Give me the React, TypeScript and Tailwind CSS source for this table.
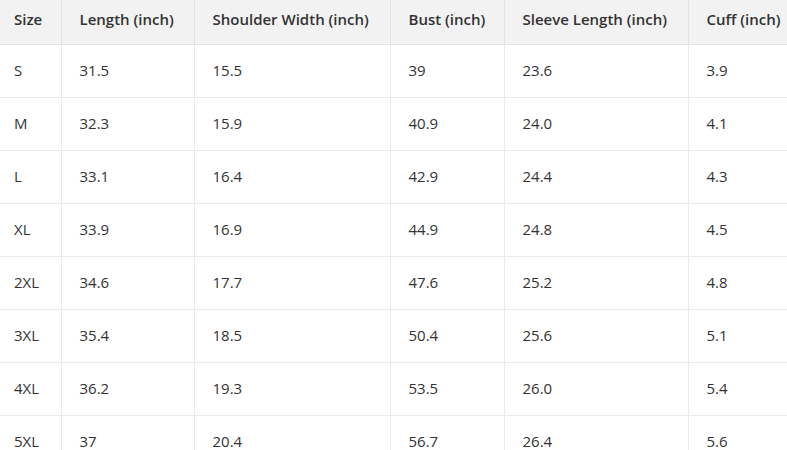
const headers = ['Size', 'Length (inch)', 'Shoulder Width (inch)', 'Bust (inch)', 'Sleeve Length (inch)', 'Cuff (inch)'];

const rows = [
  ['S', '31.5', '15.5', '39', '23.6', '3.9'],
  ['M', '32.3', '15.9', '40.9', '24.0', '4.1'],
  ['L', '33.1', '16.4', '42.9', '24.4', '4.3'],
  ['XL', '33.9', '16.9', '44.9', '24.8', '4.5'],
  ['2XL', '34.6', '17.7', '47.6', '25.2', '4.8'],
  ['3XL', '35.4', '18.5', '50.4', '25.6', '5.1'],
  ['4XL', '36.2', '19.3', '53.5', '26.0', '5.4'],
  ['5XL', '37', '20.4', '56.7', '26.4', '5.6'],
];

const widths = ['w-[61px]', 'w-[133px]', 'w-[196px]', 'w-[114px]', 'w-[184px]', 'w-[112px]'];

export default function App() {
  return (
    <div className="w-[787px] h-[450px] overflow-hidden bg-white font-['Open_Sans','Noto_Sans',sans-serif] text-[15px] text-[#333]">
      <table className="table-fixed border-collapse w-[800px]">
        <thead>
          <tr className="bg-[#f2f2f2] h-[44px]">
            {headers.map((h, i) => (
              <th
                key={h}
                className={`${widths[i]} border border-[#e2e2e2] border-t-0 ${i === 0 ? 'border-l-0 pl-[14px]' : 'pl-[18px]'} pb-[5px] text-left font-semibold whitespace-nowrap`}
              >
                {h}
              </th>
            ))}
          </tr>
        </thead>
        <tbody>
          {rows.map((r) => (
            <tr key={r[0]} className="h-[53px]">
              {r.map((c, i) => (
                <td
                  key={i}
                  className={`border border-[#ebebeb] ${i === 0 ? 'border-l-0 pl-[14px]' : 'pl-[18px]'} text-left font-normal`}
                >
                  {c}
                </td>
              ))}
            </tr>
          ))}
        </tbody>
      </table>
    </div>
  );
}
